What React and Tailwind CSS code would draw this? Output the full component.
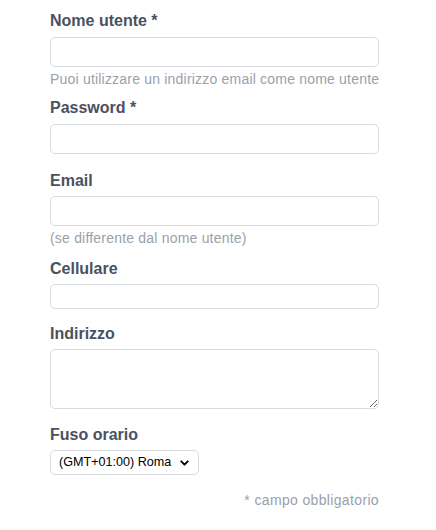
import { ChevronDown } from 'lucide-react'

function Label({ children }) {
  return (
    <label className="block text-base leading-6 font-bold text-[#4a5161]">
      {children}
    </label>
  )
}

function Hint({ children }) {
  return (
    <p className="mt-[4px] whitespace-nowrap text-sm leading-4 tracking-[0.2px] text-[#9aa1ab]">
      {children}
    </p>
  )
}

const inputCls =
  'block w-full rounded-[5px] border border-[#d8dbe0] bg-white px-2 text-sm text-gray-900 outline-none'

export default function App() {
  return (
    <div className="min-h-[530px] w-[436px] bg-white" style={{ fontFamily: '"Liberation Sans", Arial, sans-serif' }}>
      <form className="ml-[50px] w-[329px] pt-[9px] flex flex-col">
        {/* Nome utente */}
        <Label>Nome utente *</Label>
        <input type="text" className={`${inputCls} mt-1 h-[30px]`} />
        <Hint>Puoi utilizzare un indirizzo email come nome utente</Hint>

        {/* Password */}
        <div className="mt-[9px]">
          <Label>Password *</Label>
          <input type="password" className={`${inputCls} mt-1 h-[30px]`} />
        </div>

        {/* Email */}
        <div className="mt-[15px]">
          <Label>Email</Label>
          <input type="email" className={`${inputCls} mt-[3px] h-[30px]`} />
          <Hint>(se differente dal nome utente)</Hint>
        </div>

        {/* Cellulare */}
        <div className="mt-[11px]">
          <Label>Cellulare</Label>
          <input type="tel" className={`${inputCls} mt-[3px] h-[25px]`} />
        </div>

        {/* Indirizzo */}
        <div className="mt-[13px]">
          <Label>Indirizzo</Label>
          <textarea className={`${inputCls} mt-[3px] h-[60px] resize-y`} />
        </div>

        {/* Fuso orario */}
        <div className="mt-[14px]">
          <Label>Fuso orario</Label>
          <div className="relative mt-[3px] w-[149px]">
            <select
              defaultValue="rome"
              className="block h-[25px] w-full appearance-none rounded-[5px] border border-[#d8dbe0] bg-white pl-[8px] pr-5 text-[12.6px] text-black outline-none"
            >
              <option value="rome">(GMT+01:00) Roma</option>
            </select>
            <ChevronDown
              size={13}
              strokeWidth={3.5}
              className="pointer-events-none absolute right-[8px] top-1/2 -translate-y-1/2 text-black"
            />
          </div>
        </div>

        <p className="mt-[15px] text-right text-sm tracking-[0.35px] text-[#9aa1ab]">* campo obbligatorio</p>
      </form>
    </div>
  )
}
